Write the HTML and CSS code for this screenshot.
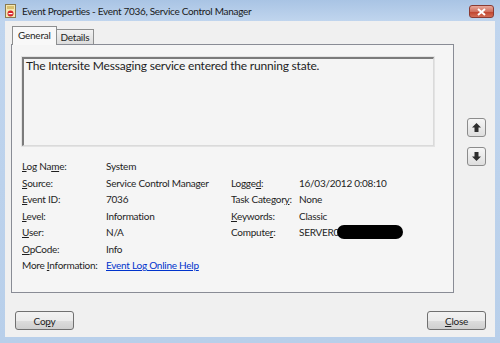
FILE: index.html
```html
<!DOCTYPE html>
<html lang="en">
<head>
  <meta charset="UTF-8" />
  <title>Event Properties</title>
  <link rel="stylesheet" href="styles.css">
</head>
<body>
  <div class="window">
    <div class="titlebar">
      <svg class="app-icon" width="11" height="14" viewBox="0 0 11 14">
        <rect x="0.5" y="0.5" width="10" height="13" fill="#f4e7b0" stroke="#8a7a50"/>
        <rect x="2" y="2" width="7" height="3" fill="#d9c070"/>
        <circle cx="5.5" cy="9.5" r="3" fill="#d4232a"/>
        <rect x="3.5" y="9" width="4" height="1.2" fill="#fff"/>
      </svg>
      <span class="title">Event Properties - Event 7036, Service Control Manager</span>
      <div class="close-x">
        <svg width="9" height="8" viewBox="0 0 9 8"><path d="M1 1 L8 7 M8 1 L1 7" stroke="#fff" stroke-width="2"/></svg>
      </div>
    </div>

    <div class="client">
      <div class="main">
        <div class="left">
          <div class="tabs">
            <div class="tab active">General</div>
            <div class="tab">Details</div>
          </div>
          <div class="panel">
            <div class="description">The Intersite Messaging service entered the running state.</div>
            <div class="fields">
              <span><u>L</u>og Na<u>m</u>e:</span><span>System</span><span></span><span></span>
              <span><u>S</u>ource:</span><span>Service Control Manager</span><span>Logge<u>d</u>:</span><span>16/03/2012 0:08:10</span>
              <span><u>E</u>vent ID:</span><span>7036</span><span>Task Categor<u>y</u>:</span><span>None</span>
              <span><u>L</u>evel:</span><span>Information</span><span><u>K</u>eywords:</span><span>Classic</span>
              <span><u>U</u>ser:</span><span>N/A</span><span>Compute<u>r</u>:</span><span class="computer">SERVER0<i class="redact"></i></span>
              <span><u>O</u>pCode:</span><span>Info</span><span></span><span></span>
              <span>More <u>I</u>nformation:</span><span><a href="#">Event Log Online Help</a></span><span></span><span></span>
            </div>
          </div>
        </div>
        <div class="side">
          <button class="arrow">
            <svg width="11" height="11" viewBox="0 0 11 11"><path d="M5.5 1 L10 5.5 L7.5 5.5 L7.5 10 L3.5 10 L3.5 5.5 L1 5.5 Z" fill="#2e2e2e"/></svg>
          </button>
          <button class="arrow">
            <svg width="11" height="11" viewBox="0 0 11 11"><path d="M5.5 10 L10 5.5 L7.5 5.5 L7.5 1 L3.5 1 L3.5 5.5 L1 5.5 Z" fill="#2e2e2e"/></svg>
          </button>
        </div>
      </div>
      <div class="footer">
        <button class="btn">Co<u>p</u>y</button>
        <button class="btn"><u>C</u>lose</button>
      </div>
    </div>
  </div>
</body>
</html>
```

FILE: styles.css
```css
body {
  margin: 0;
  font-family: 'Lato', 'Noto Sans', sans-serif;
  font-size: 10px;
  letter-spacing: -0.25px;
  color: #1e1e1e;
}

.window {
  width: 500px;
  height: 343px;
  box-sizing: border-box;
  background: linear-gradient(180deg, #a9c4e4 0px, #c0d5ee 21px, #b8cfea 100%);
  padding: 0 5px 6px 5px;
  display: flex;
  flex-direction: column;
}

.titlebar {
  height: 21px;
  display: flex;
  align-items: center;
  position: relative;
}

.app-icon {
  margin: 0 6px 0 0;
}

.title {
  font-size: 10px;
  letter-spacing: -0.3px;
  color: #1a1a1a;
}

.close-x {
  position: absolute;
  right: 1px;
  top: 5px;
  width: 25px;
  height: 13px;
  box-sizing: border-box;
  border: 1px solid #8a3b33;
  border-radius: 3px;
  background: linear-gradient(180deg, #e9a99c 0%, #d0705f 50%, #c0442f 55%, #d36d56 100%);
  display: flex;
  align-items: center;
  justify-content: center;
}

.client {
  flex: 1;
  background: #f0f0f0;
  display: flex;
  flex-direction: column;
}

.main {
  display: flex;
  padding: 5px 0 0 6px;
}

.left {
  width: 443px;
}

.tabs {
  display: flex;
  align-items: flex-end;
  height: 18px;
  padding-left: 1px;
  position: relative;
  z-index: 1;
}

.tab {
  height: 14px;
  padding: 0 4px;
  border: 1px solid #8e8f8f;
  border-bottom: none;
  background: linear-gradient(180deg, #f2f2f2, #dcdcdc);
  line-height: 14px;
  margin-left: -1px;
}

.tab.active {
  height: 18px;
  line-height: 16px;
  background: #f8f8f8;
  padding: 0 5px;
  margin-bottom: -1px;
  margin-left: 0;
}

.panel {
  height: 249px;
  box-sizing: border-box;
  border: 1px solid #898c95;
  background: #f5f5f5;
  padding: 12px 0 0 10px;
}

.description {
  width: 412px;
  height: 89px;
  box-sizing: border-box;
  border-top: 2px solid #7b7b7b;
  border-left: 2px solid #7b7b7b;
  border-right: 1px solid #dadada;
  border-bottom: 1px solid #dadada;
  outline: 1px solid #e3e3e3;
  background: #f4f4f4;
  padding: 0 2px;
  font-size: 12px;
  line-height: 13px;
  letter-spacing: -0.2px;
}

.fields {
  margin-top: 12px;
  display: grid;
  grid-template-columns: 84px 125px 68px 1fr;
  grid-auto-rows: 16.5px;
  line-height: 16.5px;
  white-space: nowrap;
}

.fields a {
  color: #0033cc;
}

.computer {
  display: flex;
  align-items: center;
}

.redact {
  display: inline-block;
  width: 66px;
  height: 14px;
  border-radius: 7px;
  background: #000;
  margin-left: -2px;
}

.side {
  margin-left: 13px;
  padding-top: 92px;
  display: flex;
  flex-direction: column;
  gap: 10px;
}

.arrow {
  width: 19px;
  height: 19px;
  padding: 0;
  border: 1px solid #8c8c8c;
  border-radius: 3px;
  background: linear-gradient(180deg, #f6f6f6, #dedede);
  display: flex;
  align-items: center;
  justify-content: center;
}

.footer {
  display: flex;
  justify-content: space-between;
  padding: 18px 9px 0 10px;
}

.btn {
  width: 59px;
  height: 19px;
  padding: 0;
  font-family: inherit;
  font-size: 10px;
  letter-spacing: inherit;
  color: #1e1e1e;
  border: 1px solid #707070;
  border-radius: 3px;
  background: linear-gradient(180deg, #f2f2f2 0%, #ebebeb 50%, #dddddd 51%, #cfcfcf 100%);
}
```
